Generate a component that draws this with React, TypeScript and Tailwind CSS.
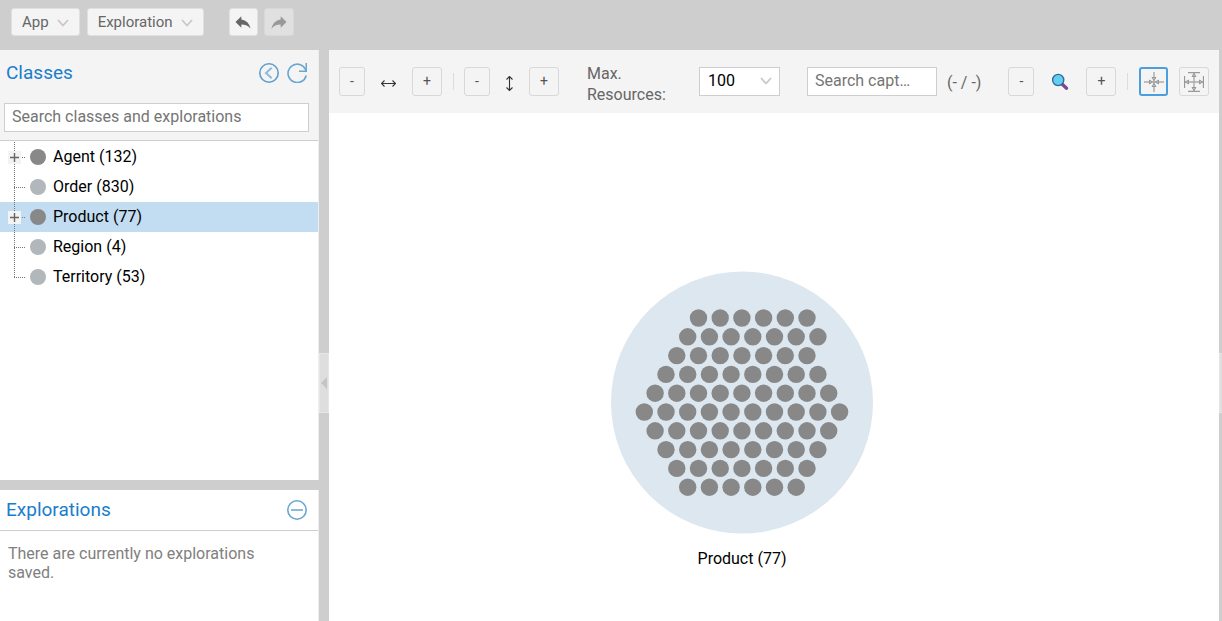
import type { ReactNode } from 'react';
import { MdReply } from 'react-icons/md';

const classes = [
  { name: 'Agent', count: 132, expandable: true },
  { name: 'Order', count: 830, expandable: false },
  { name: 'Product', count: 77, expandable: true },
  { name: 'Region', count: 4, expandable: false },
  { name: 'Territory', count: 53, expandable: false },
];

// resources per row of the hexagonal cluster, with the x of the first one
const clusterRows = [
  { x: 87.5, count: 6 },
  { x: 76.7, count: 7 },
  { x: 65.8, count: 7 },
  { x: 55, count: 8 },
  { x: 44.1, count: 9 },
  { x: 33.3, count: 10 },
  { x: 44.1, count: 9 },
  { x: 55, count: 8 },
  { x: 65.8, count: 7 },
  { x: 76.7, count: 6 },
];

function Chevron({ className = '' }: { className?: string }) {
  return (
    <svg className={className} width="12" height="8" viewBox="0 0 12 8" fill="none" stroke="#c8c8c8" strokeWidth="1.8">
      <path d="M1 1l5 5.5L11 1" />
    </svg>
  );
}

function MenuButton({ children }: { children: ReactNode }) {
  return (
    <button className="flex h-7 items-center gap-2 rounded-[3px] border border-[#e0e0e0] bg-[#f4f4f4] px-[10px] text-[15px] text-[#666]">
      {children}
      <Chevron className="mt-px" />
    </button>
  );
}

function StepButton({ label, sign }: { label: string; sign: '+' | '-' }) {
  return (
    <button
      aria-label={label}
      className={`h-[29px] shrink-0 rounded-[3px] border border-[#d8d8d8] pb-px text-sm text-[#555] ${sign === '+' ? 'w-[30px]' : 'w-[26px]'}`}
    >
      {sign}
    </button>
  );
}

function Divider() {
  return <div className="h-[17px] w-px shrink-0 bg-[#dcdcdc]" />;
}

function TreeRow({ item, index }: { item: (typeof classes)[number]; index: number }) {
  const selected = item.name === 'Product';
  const last = index === classes.length - 1;
  return (
    <li className={`flex h-[30px] items-center ${selected ? 'bg-[#c2dcf1]' : ''}`}>
      <svg className="shrink-0" width="30" height="30" viewBox="0 0 30 30">
        <path d={last ? 'M14.5 0V15' : 'M14.5 0V30'} stroke="#777" strokeDasharray="1 1" />
        <path d="M14 15.5H26" stroke="#777" strokeDasharray="1 1" />
        {item.expandable && (
          <>
            <rect x="8" y="9" width="13" height="13" fill="#f3f3f3" />
            <path d="M10 15.5h9M14.5 11v9" stroke="#666" strokeWidth="1.4" />
          </>
        )}
      </svg>
      <span className={`size-4 shrink-0 rounded-full ${item.expandable ? 'bg-[#888]' : 'bg-[#b1b7bb]'}`} />
      <span className="ml-[7px] text-base leading-5 text-black">
        {item.name} ({item.count})
      </span>
    </li>
  );
}

function CollapseHandle() {
  return (
    <button aria-label="Collapse sidebar" className="flex h-[60px] w-full items-center justify-center border border-[#e6e6e6] bg-[#dedede]">
      <svg className="shrink-0" width="6" height="12" viewBox="0 0 6 12">
        <path d="M6 0v12L0 6z" fill="#c4c4c4" />
      </svg>
    </button>
  );
}

function Sidebar() {
  return (
    <aside className="flex w-[319px] shrink-0 flex-col gap-[10px]">
      <section className="flex min-h-0 flex-1 flex-col border-r border-[#eee] bg-white">
        <div className="border-b border-[#cecece] bg-[#f4f4f4] px-1 pt-3 pb-2">
          <div className="flex h-[22px] items-center gap-2 pr-[7px] pl-[2px]">
            <h2 className="flex-1 text-[19px] leading-[22px] text-[#1a7dcb]">Classes</h2>
            <button aria-label="Back">
              <svg width="20" height="20" viewBox="0 0 20 20" fill="none" stroke="#5f9fcc" strokeWidth="1.6">
                <circle cx="10" cy="10" r="9.2" />
                <path d="M12.7 4.7L7 10l5.7 5.3" stroke="#8dbbdc" strokeWidth="2" />
              </svg>
            </button>
            <button aria-label="Refresh">
              <svg width="20" height="20" viewBox="0 0 20 20" fill="none" stroke="#6aa6d0" strokeWidth="1.6">
                <path d="M19.2 12.5A9.2 9.2 0 1 1 16.5 3.6L19.2 7.5" />
                <path d="M19.3 0v8.2h-7.3" />
              </svg>
            </button>
          </div>
          <input
            type="text"
            aria-label="Search classes and explorations"
            placeholder="Search classes and explorations"
            className="mt-[19px] block h-[29px] w-[305px] border border-[#cecece] bg-white px-[7px] pb-[2px] text-base placeholder:text-[#757575] placeholder:opacity-100"
          />
        </div>
        <ul className="pt-px">
          {classes.map((item, index) => (
            <TreeRow key={item.name} item={item} index={index} />
          ))}
        </ul>
      </section>

      <section className="min-h-[131px] border-r border-[#eee] bg-white">
        <div className="flex h-[41px] items-center border-b border-[#cecece] pr-[11px] pl-[6px]">
          <h2 className="flex-1 text-[19px] leading-[22px] text-[#1a7dcb]">Explorations</h2>
          <button aria-label="Minimize explorations">
            <svg width="20" height="20" viewBox="0 0 20 20" fill="none" stroke="#6aa6d0" strokeWidth="1.6">
              <circle cx="10" cy="10" r="9.2" />
              <path d="M4 10h12" stroke="#8dbbdc" strokeWidth="2" />
            </svg>
          </button>
        </div>
        <p className="pt-[13px] pr-10 pl-2 text-base leading-[19px] text-[#808080]">There are currently no explorations saved.</p>
      </section>
    </aside>
  );
}

function Toolbar() {
  return (
    <div className="flex h-[63px] shrink-0 items-center bg-[#f4f4f4] px-[10px] text-base text-[#666]">
      <StepButton label="Decrease width" sign="-" />
      <svg className="mx-4 mt-[3px] shrink-0" width="15" height="9" viewBox="0 0 15 9" fill="none" stroke="#333" strokeWidth="1.1">
        <path d="M1 4.5h13M3.5 1.5l-3 3 3 3M11.5 1.5l3 3-3 3" />
      </svg>
      <StepButton label="Increase width" sign="+" />
      <div className="mr-[10px] ml-[11px] flex">
        <Divider />
      </div>
      <StepButton label="Decrease height" sign="-" />
      <svg className="mx-[15px] mt-[3px] shrink-0" width="9" height="15" viewBox="0 0 9 15" fill="none" stroke="#333" strokeWidth="1.1">
        <path d="M4.5 1v13M1.5 3.5l3-3 3 3M1.5 11.5l3 3 3-3" />
      </svg>
      <StepButton label="Increase height" sign="+" />

      <label htmlFor="max-resources" className="ml-7 w-[98px] shrink-0 pt-[4px] leading-[21px]">
        Max. Resources:
      </label>
      <div className="relative ml-[14px] shrink-0">
        <select
          id="max-resources"
          defaultValue="100"
          className="block h-[29px] w-[81px] appearance-none border border-[#cecece] bg-white px-2 pb-[2px] text-base text-black"
        >
          <option>100</option>
          <option>200</option>
          <option>500</option>
        </select>
        <Chevron className="pointer-events-none absolute top-[10px] right-2" />
      </div>

      <input
        type="text"
        aria-label="Search captions"
        placeholder="Search captions"
        className="ml-[27px] h-[29px] w-[130px] shrink-0 text-ellipsis border border-[#cecece] bg-white pr-[23px] pb-[2px] pl-[7px] text-base placeholder:text-[#757575] placeholder:opacity-100"
      />
      <span className="mr-[27px] ml-[10px] shrink-0 pt-[3px] whitespace-nowrap">(- / -)</span>

      <StepButton label="Zoom out" sign="-" />
      <svg className="mx-[17px] shrink-0" width="18" height="18" viewBox="0 0 18 18">
        <path d="M11 11l4.5 4.2" stroke="#80478b" strokeWidth="3.4" strokeLinecap="round" />
        <circle cx="7.2" cy="7" r="5.6" fill="#62d0ec" stroke="#35629f" strokeWidth="1.3" />
      </svg>
      <StepButton label="Zoom in" sign="+" />
      <div className="mx-[11px] flex">
        <Divider />
      </div>
      <button aria-label="Center view" className="flex h-[29px] w-[29px] shrink-0 items-center justify-center rounded-[3px] border-2 border-[#4a9fdc]">
        <svg width="20" height="20" viewBox="0 0 20 20" fill="none" stroke="#999">
          <path d="M0 10h20M10 0v20" stroke="#aaa" strokeWidth="1.4" />
          <path d="M5.5 8l3 2-3 2zM14.5 8l-3 2 3 2zM8 5.5l2 3 2-3zM8 14.5l2-3 2 3z" />
        </svg>
      </button>
      <button aria-label="Fit view" className="ml-[11px] flex h-[29px] w-[30px] shrink-0 items-center justify-center rounded-[3px] border border-[#d8d8d8]">
        <svg width="20" height="20" viewBox="0 0 20 20" fill="none" stroke="#999">
          <path d="M1 10h18M10 1v18" stroke="#aaa" strokeWidth="1.4" />
          <path d="M.5 4v12M19.5 4v12M4 .5h12M4 19.5h12" strokeWidth="1.3" />
          <path d="M4.5 8l-3 2 3 2zM15.5 8l3 2-3 2zM8 4.5l2-3 2 3zM8 15.5l2 3 2-3z" />
        </svg>
      </button>
    </div>
  );
}

function Canvas() {
  return (
    <div className="relative min-h-0 flex-1 overflow-hidden bg-white">
      <div className="absolute top-[158px] left-[282px] flex flex-col items-center">
        <svg width="262" height="263" viewBox="0 0 262 263">
          <circle cx="131" cy="131.5" r="131" fill="#dde7ef" />
          {clusterRows.map((row, r) =>
            Array.from({ length: row.count }, (_, i) => (
              <circle key={`${r}-${i}`} cx={row.x + i * 21.7} cy={47 + r * 18.8} r="8.7" fill="#888" />
            )),
          )}
        </svg>
        <span className="mt-[13px] text-base leading-6 text-black">Product (77)</span>
      </div>
    </div>
  );
}

export default function App() {
  return (
    <div className="flex h-screen flex-col overflow-hidden bg-[#cecece] font-['Roboto',sans-serif]">
      <header className="flex h-[50px] shrink-0 items-center pb-[6px] pl-[11px] text-base">
        <MenuButton>App</MenuButton>
        <div className="ml-[7px]">
          <MenuButton>Exploration</MenuButton>
        </div>
        <button aria-label="Undo" className="ml-[25px] flex h-7 w-[29px] items-center justify-center rounded-[3px] border border-[#e0e0e0] bg-[#f4f4f4] text-[#666]">
          <MdReply size={20} />
        </button>
        <button aria-label="Redo" disabled className="ml-[6px] flex h-7 w-[30px] items-center justify-center rounded-[3px] border border-[#d8d8d8] bg-[#e0e0e0] text-[#999]">
          <MdReply size={20} className="-scale-x-100" />
        </button>
      </header>

      <div className="flex min-h-0 flex-1">
        <Sidebar />
        <div className="flex w-[10px] shrink-0 flex-col pt-[303px]">
          <CollapseHandle />
        </div>
        <main className="flex min-w-0 flex-1 flex-col">
          <Toolbar />
          <Canvas />
        </main>
        <div className="w-[3px] shrink-0 pt-[303px]">
          <div className="h-[60px] border-y border-l border-[#e6e6e6] bg-[#dedede]" />
        </div>
      </div>
    </div>
  );
}
